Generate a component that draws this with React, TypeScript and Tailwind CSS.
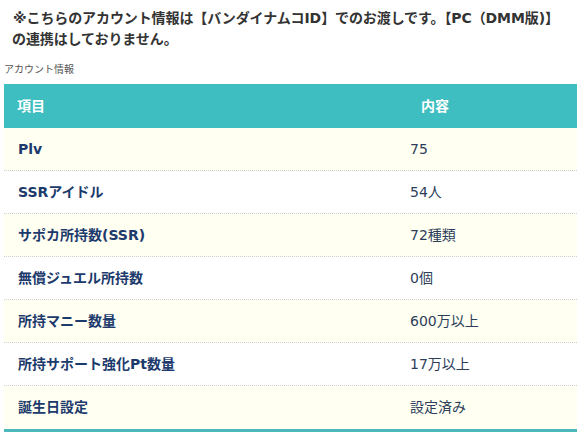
import React from "react";

const rows: [string, string][] = [
  ["Plv", "75"],
  ["SSRアイドル", "54人"],
  ["サポカ所持数(SSR)", "72種類"],
  ["無償ジュエル所持数", "0個"],
  ["所持マニー数量", "600万以上"],
  ["所持サポート強化Pt数量", "17万以上"],
  ["誕生日設定", "設定済み"],
];

export default function App() {
  return (
    <div
      className="w-[587px] h-[437px] bg-white overflow-hidden"
      style={{ fontFamily: '"DejaVu Sans", "Noto Sans CJK JP", sans-serif' }}
    >
      <p className="pt-[8px] pl-[12px] pr-[10px] text-[14px] leading-[21px] font-bold text-[#333333] tracking-[-0.1px]">
        <span className="pl-[1px]">※こちらのアカウント情報は【バンダイナムコID】でのお渡しです。【PC（DMM版)】</span>
        <br />
        の連携はしておりません。
      </p>
      <div className="pl-[4px] pt-[14px] text-[10px] leading-[12px] text-[#555555]">アカウント情報</div>
      <div className="ml-[4px] mt-[8px] w-[573px] border-b-[3px] border-[#4db8bb]">
        <div className="flex h-[44px] items-center bg-[#3ebec1] text-white font-bold text-[14px]">
          <div className="w-[392px] pl-[13px]">項目</div>
          <div className="flex-1 pl-[25px]">内容</div>
        </div>
        {rows.map(([k, v], i) => (
          <div
            key={k}
            className={`flex h-[43px] items-center text-[14px] ${
              i % 2 === 0 ? "bg-[#fffff2]" : "bg-white"
            } ${i < rows.length - 1 ? "border-b border-dotted border-[#cfcfcf]" : ""}`}
          >
            <div className="w-[392px] pl-[14px] font-bold text-[#1c3a6b]">{k}</div>
            <div className="flex-1 pl-[14px] text-[#2d3e5a]">{v}</div>
          </div>
        ))}
      </div>
    </div>
  );
}
